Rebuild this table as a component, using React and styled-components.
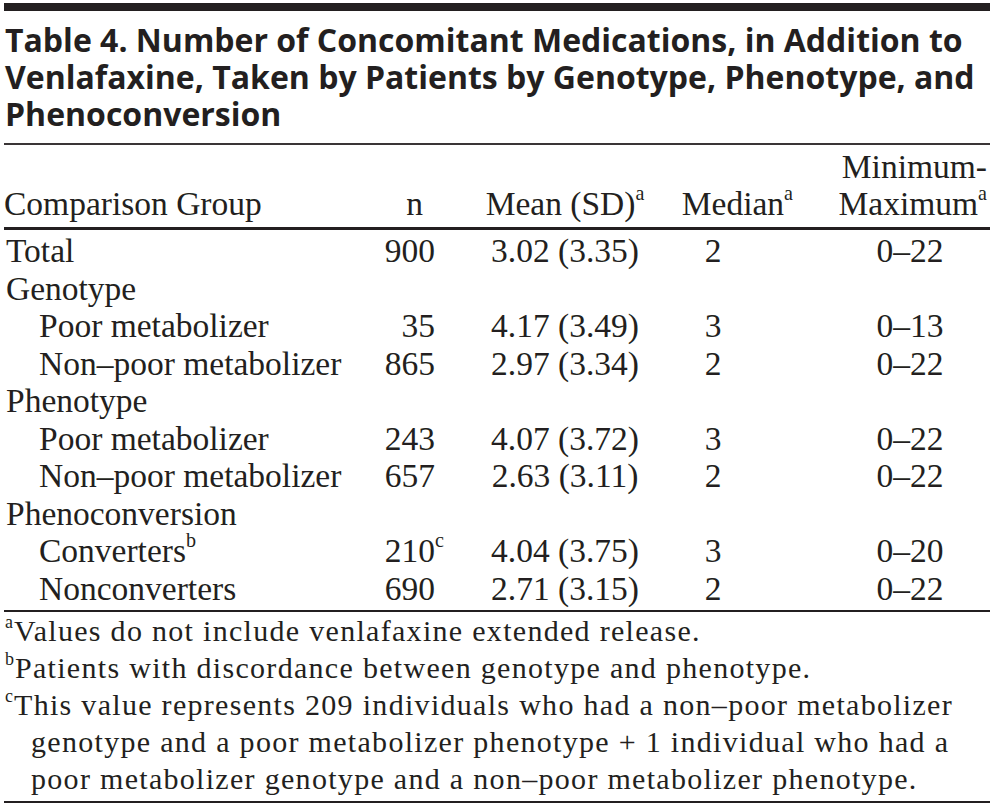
import React from "react";
import styled, { createGlobalStyle } from "styled-components";

const GlobalStyle = createGlobalStyle`
  body {
    margin: 0;
    background: #ffffff;
  }
`;

const ROWS = [
  { label: "Total", n: "900", mean: "3.02 (3.35)", median: "2", range: "0–22" },
  { label: "Genotype" },
  { label: "Poor metabolizer", indent: true, n: "35", mean: "4.17 (3.49)", median: "3", range: "0–13" },
  { label: "Non–poor metabolizer", indent: true, n: "865", mean: "2.97 (3.34)", median: "2", range: "0–22" },
  { label: "Phenotype" },
  { label: "Poor metabolizer", indent: true, n: "243", mean: "4.07 (3.72)", median: "3", range: "0–22" },
  { label: "Non–poor metabolizer", indent: true, n: "657", mean: "2.63 (3.11)", median: "2", range: "0–22" },
  { label: "Phenoconversion" },
  { label: "Converters", labelNote: "b", indent: true, n: "210", nNote: "c", mean: "4.04 (3.75)", median: "3", range: "0–20" },
  { label: "Nonconverters", indent: true, n: "690", mean: "2.71 (3.15)", median: "2", range: "0–22" },
];

const App = () => {
  return (
    <>
      <GlobalStyle />
      <Page>
        <TopBar />
        <Title>
          Table 4. Number of Concomitant Medications, in Addition to
          <br />
          Venlafaxine, Taken by Patients by Genotype, Phenotype, and
          <br />
          Phenoconversion
        </Title>
        <TitleRule />

        <HeadRow>
          <Cell $align="left">Comparison Group</Cell>
          <Cell $align="right" $pad="0 47px 0 0">n</Cell>
          <Cell $align="center">
            Mean (SD)<Sup>a</Sup>
          </Cell>
          <Cell $align="right" $pad="0 7px 0 0">
            Median<Sup>a</Sup>
          </Cell>
          <Cell $align="right" $pad="0 3px 0 0">
            Minimum-
            <br />
            Maximum<Sup>a</Sup>
          </Cell>
        </HeadRow>

        <Body>
          {ROWS.map((row, i) => (
            <Row key={i}>
              <Cell $align="left" $pad={row.indent ? "0 0 0 35px" : "0 0 0 2px"}>
                {row.label}
                {row.labelNote && <Sup>{row.labelNote}</Sup>}
              </Cell>
              <Cell $align="right" $pad="0 35px 0 0">
                {row.n}
                {row.nNote && <Sup $hang>{row.nNote}</Sup>}
              </Cell>
              <Cell $align="center">{row.mean}</Cell>
              <Cell $align="center" $pad="0 34px 0 0">
                {row.median}
              </Cell>
              <Cell $align="center" $pad="0 0 0 30px">
                {row.range}
              </Cell>
            </Row>
          ))}
        </Body>

        <Notes>
          <Note>
            <NoteMark>a</NoteMark>Values do not include venlafaxine extended release.
          </Note>
          <Note>
            <NoteMark>b</NoteMark>Patients with discordance between genotype and phenotype.
          </Note>
          <Note>
            <NoteMark>c</NoteMark>This value represents 209 individuals who had a non–poor metabolizer
            <br />
            genotype and a poor metabolizer phenotype + 1 individual who had a
            <br />
            poor metabolizer genotype and a non–poor metabolizer phenotype.
          </Note>
        </Notes>
      </Page>
    </>
  );
};

const Page = styled.div`
  width: 986px;
  margin-left: 4px;
  color: #231f20;
  font-family: "Liberation Serif", "Times New Roman", serif;
`;

const TopBar = styled.div`
  margin-top: 3px;
  height: 8px;
  background: #231f20;
`;

const Title = styled.h1`
  margin: 10px 0 11px;
  padding-left: 1px;
  font-family: "Open Sans", Lato, sans-serif;
  font-weight: 700;
  font-size: 32px;
  line-height: 37px;
  white-space: nowrap;
`;

const TitleRule = styled.div`
  height: 2px;
  background: #3a3536;
`;

const grid = `
  display: grid;
  grid-template-columns: 356px 110px 190px 140px 190px;
`;

const HeadRow = styled.div`
  ${grid}
  align-items: end;
  padding: 3px 0 5px;
  font-size: 33.5px;
  line-height: 37px;
  border-bottom: 3px solid #231f20;
`;

const Body = styled.div`
  padding: 2px 0 3px;
  border-bottom: 2px solid #231f20;
  font-size: 33.5px;
`;

const Row = styled.div`
  ${grid}
  height: 37.5px;
  line-height: 37.5px;
`;

const Cell = styled.div`
  text-align: ${(p) => p.$align};
  padding: ${(p) => p.$pad || "0"};
  white-space: nowrap;
`;

const Sup = styled.sup`
  font-size: 0.6em;
  line-height: 0;
  vertical-align: 0.75em;
  margin-right: ${(p) => (p.$hang ? "-0.45em" : "0")};
`;

const Notes = styled.div`
  padding-bottom: 4px;
  border-bottom: 2px solid #231f20;
  font-size: 30px;
  line-height: 37px;
  letter-spacing: 1.3px;
`;

const Note = styled.div`
  padding-left: 27px;
  text-indent: -26px;
  white-space: nowrap;
`;

const NoteMark = styled.sup`
  font-size: 0.6em;
  line-height: 0;
  vertical-align: 0.72em;
  letter-spacing: 0;
  margin-right: 1px;
`;

export default App;
